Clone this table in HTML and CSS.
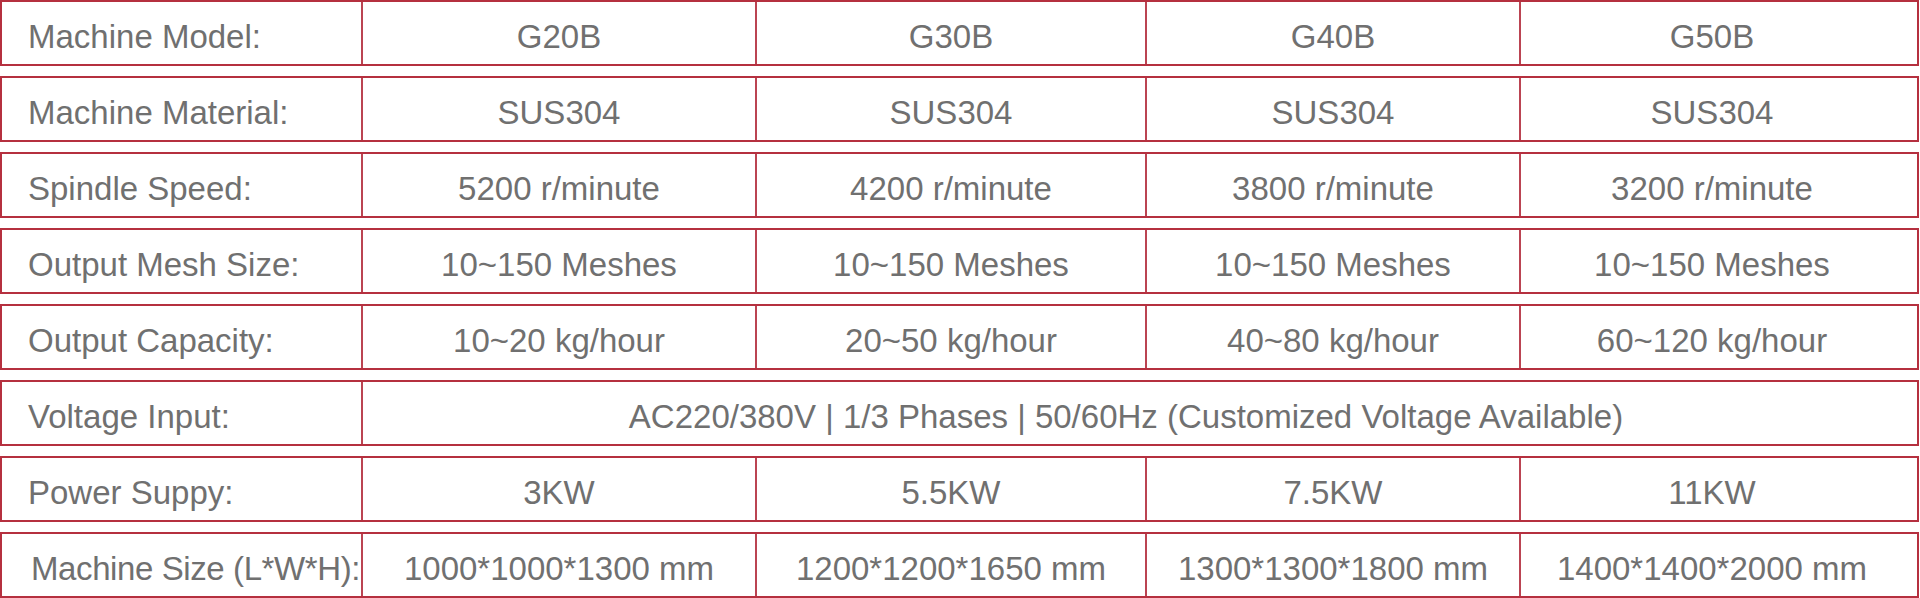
FILE: index.html
```html
<!DOCTYPE html>
<html lang="en">
<head>
<meta charset="utf-8">
<title>Machine Specifications</title>
<link rel="stylesheet" href="styles.css">
</head>
<body>
<div class="spec">
  <div class="row">
    <div class="cell label">Machine Model:</div>
    <div class="cell">G20B</div>
    <div class="cell">G30B</div>
    <div class="cell">G40B</div>
    <div class="cell">G50B</div>
  </div>
  <div class="row">
    <div class="cell label">Machine Material:</div>
    <div class="cell">SUS304</div>
    <div class="cell">SUS304</div>
    <div class="cell">SUS304</div>
    <div class="cell">SUS304</div>
  </div>
  <div class="row">
    <div class="cell label">Spindle Speed:</div>
    <div class="cell">5200 r/minute</div>
    <div class="cell">4200 r/minute</div>
    <div class="cell">3800 r/minute</div>
    <div class="cell">3200 r/minute</div>
  </div>
  <div class="row">
    <div class="cell label">Output Mesh Size:</div>
    <div class="cell">10~150 Meshes</div>
    <div class="cell">10~150 Meshes</div>
    <div class="cell">10~150 Meshes</div>
    <div class="cell">10~150 Meshes</div>
  </div>
  <div class="row">
    <div class="cell label">Output Capacity:</div>
    <div class="cell">10~20 kg/hour</div>
    <div class="cell">20~50 kg/hour</div>
    <div class="cell">40~80 kg/hour</div>
    <div class="cell">60~120 kg/hour</div>
  </div>
  <div class="row">
    <div class="cell label">Voltage Input:</div>
    <div class="cell span">AC220/380V | 1/3 Phases | 50/60Hz (Customized Voltage Available)</div>
  </div>
  <div class="row">
    <div class="cell label">Power Suppy:</div>
    <div class="cell">3KW</div>
    <div class="cell">5.5KW</div>
    <div class="cell">7.5KW</div>
    <div class="cell">11KW</div>
  </div>
  <div class="row">
    <div class="cell label label-wide">Machine Size (L*W*H):</div>
    <div class="cell">1000*1000*1300 mm</div>
    <div class="cell">1200*1200*1650 mm</div>
    <div class="cell">1300*1300*1800 mm</div>
    <div class="cell">1400*1400*2000 mm</div>
  </div>
</div>
</body>
</html>
```
FILE: styles.css
```css
html, body {
  margin: 0;
  padding: 0;
  background: #ffffff;
}

body {
  font-family: "Liberation Sans", Arial, sans-serif;
  color: #707070;
}

.spec {
  display: flex;
  flex-direction: column;
  gap: 10px;
  width: 1919px;
}

.row {
  display: grid;
  grid-template-columns: 359px 394px 390px 374px 1fr;
  height: 66px;
  box-sizing: border-box;
  border: 2px solid #b5303f;
}

.cell {
  display: flex;
  align-items: center;
  justify-content: center;
  box-sizing: border-box;
  padding-top: 8px;
  font-size: 33px;
  white-space: nowrap;
  border-left: 2px solid #bb4452;
}

.cell.label {
  justify-content: flex-start;
  padding-left: 26px;
  border-left: none;
}

.cell.label-wide {
  padding-left: 29px;
  letter-spacing: -0.4px;
}

.cell:nth-child(5) {
  padding-right: 14px;
}

.cell.span {
  grid-column: 2 / 6;
  padding-right: 28px;
}
```
